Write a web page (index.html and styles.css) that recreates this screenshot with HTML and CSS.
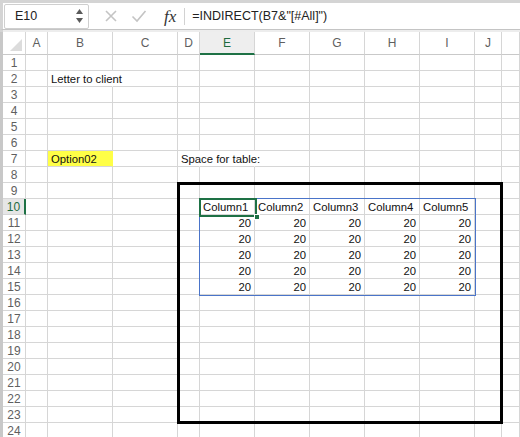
FILE: index.html
```html
<!DOCTYPE html>
<html>
	<head>
		<meta charset="UTF-8">
		<title>Sheet</title>
		<link rel="stylesheet" href="styles.css">
	</head>
	<body>
		<div class="fbar">
			<div class="namebox">
				<span class="ref">E10</span>
				<svg class="spin" width="9" height="16" viewBox="0 0 9 16">
					<path d="M4.5 1 L8 6 L1 6 Z" fill="#5a5a5a" />
					<path d="M4.5 15 L8 10 L1 10 Z" fill="#5a5a5a" />
				</svg>
			</div>
			<div class="fbtns">
				<svg width="14" height="14" viewBox="0 0 14 14">
					<path d="M2 2 L12 12 M12 2 L2 12" stroke="#c4c4c4" stroke-width="1.6" fill="none" />
				</svg>
				<svg width="16" height="14" viewBox="0 0 16 14">
					<path d="M1.5 7.5 L6 12 L14.5 2" stroke="#c4c4c4" stroke-width="1.6" fill="none" />
				</svg>
				<span class="fx">fx</span>
			</div>
			<div class="formula">=INDIRECT(B7&amp;"[#All]")</div>
		</div>
		<div class="gap"></div>
		<div class="wrap">
			<div class="sheet" id="sheet">
				<div class="box"></div>
				<div class="range"></div>
				<div class="sel"><span class="handle"></span></div>
			</div>
		</div>

		<script type="text/javascript">
			var sheet = document.getElementById("sheet");
			var letters = ["", "A", "B", "C", "D", "E", "F", "G", "H", "I", "J", ""];
			// 单元格内容
			var data = {
				"2,2": { t: "Letter to client", c: "nb" },
				"7,2": { t: "Option02", c: "yellow" },
				"7,4": { t: "Space for table:", c: "nb" },
				"7,5": { t: "", c: "nb" }
			};
			for (var k = 0; k < 5; k++) {
				data["10," + (k + 5)] = { t: "Column" + (k + 1), c: "" };
				for (var r = 11; r <= 15; r++) {
					data[r + "," + (k + 5)] = { t: "20", c: "num" };
				}
			}
			function cell(cls, text) {
				var d = document.createElement("div");
				d.className = cls;
				d.textContent = text;
				sheet.appendChild(d);
			}
			// 列标题
			for (var c = 0; c < letters.length; c++) {
				if (c == 0) {
					cell("colhead corner", "");
				} else {
					cell(c == 5 ? "colhead on" : "colhead", letters[c]);
				}
			}
			// 行
			for (var r = 1; r <= 24; r++) {
				cell(r == 10 ? "rowhead on" : "rowhead", r);
				for (var c = 1; c < letters.length; c++) {
					var item = data[r + "," + c];
					cell(item ? "cell " + item.c : "cell", item ? item.t : "");
				}
			}
		</script>
	</body>
</html>
```

FILE: styles.css
```css
* {
	margin: 0;
	padding: 0;
	box-sizing: border-box;
}

html,
body {
	width: 100%;
	height: 100%;
	overflow: hidden;
}

body {
	background: #fff;
	font-family: "Liberation Sans", Arial, sans-serif;
	border-top: 3px solid #d4d4d4;
}

.fbar {
	height: 27px;
	display: flex;
	align-items: center;
	background: #fff;
	border-bottom: 1px solid #c4c4c4;
	border-left: 3px solid #d4d4d4;
}

.namebox {
	width: 85px;
	height: 25px;
	margin-left: 1px;
	display: flex;
	align-items: center;
	justify-content: space-between;
	padding: 0 4px 0 10px;
	border: 1px solid #cfcfcf;
	border-radius: 2px;
	font-size: 12.5px;
	color: #222;
}

.fbtns {
	display: flex;
	align-items: center;
	gap: 13px;
	padding: 0 8px 0 15px;
	height: 17px;
	border-right: 1px solid #d2d2d2;
}

.fx {
	font-family: "Liberation Serif", "Times New Roman", serif;
	font-style: italic;
	font-size: 17px;
	color: #333;
	margin-left: 4px;
	line-height: 17px;
}

.formula {
	padding-left: 7px;
	font-size: 12.5px;
	color: #222;
}

.gap {
	height: 2px;
	background: #ededed;
	border-left: 3px solid #d4d4d4;
}

.wrap {
	border-left: 3px solid #c8c8c8;
}

.sheet {
	position: relative;
	display: grid;
	grid-template-columns: 23px 22px 65px 65px 22px 55px 55px 55px 55px 55px 27px 1fr;
	grid-template-rows: 23px;
	grid-auto-rows: 16px;
	font-size: 11.3px;
	color: #111;
}

.colhead,
.rowhead {
	color: #5f5f5f;
	font-size: 12px;
	display: flex;
	align-items: center;
	justify-content: center;
	border-right: 1px solid #d6d6d6;
	border-bottom: 1px solid #d6d6d6;
	background: #fff;
}

.colhead {
	border-bottom-color: #c9c9c9;
}

.corner {
	position: relative;
}

.corner::after {
	content: "";
	position: absolute;
	right: 3px;
	bottom: 3px;
	border-style: solid;
	border-width: 0 0 12px 12px;
	border-color: transparent transparent #dcdcdc transparent;
}

.colhead.on {
	color: #1e6b3e;
	background: #eeeeee;
	border-bottom: 2px solid #1e7145;
}

.rowhead.on {
	color: #1e6b3e;
	background: #e6e6e6;
	border-right: 2px solid #1e7145;
}

.cell {
	border-right: 1px solid #d6d6d6;
	border-bottom: 1px solid #d6d6d6;
	padding: 1px 3px 0 3px;
	line-height: 15px;
	white-space: nowrap;
	overflow: visible;
	position: relative;
	z-index: 1;
}

.cell.nb {
	border-right-color: transparent;
}

.cell.yellow {
	background: #ffff47;
	border-right-color: #ffff47;
}

.cell.num {
	text-align: right;
}

.box {
	position: absolute;
	left: 174px;
	top: 150px;
	width: 326px;
	height: 242px;
	border: 3px solid #000;
	z-index: 2;
}

.range {
	position: absolute;
	left: 196px;
	top: 166px;
	width: 277px;
	height: 98px;
	border: 1px solid #4a74c9;
	z-index: 2;
}

.sel {
	position: absolute;
	left: 196px;
	top: 166px;
	width: 58px;
	height: 19px;
	border: 2px solid #1e7145;
	z-index: 3;
}

.handle {
	position: absolute;
	right: -5px;
	bottom: -5px;
	width: 6px;
	height: 6px;
	background: #1e7145;
	border: 1px solid #fff;
}
```
